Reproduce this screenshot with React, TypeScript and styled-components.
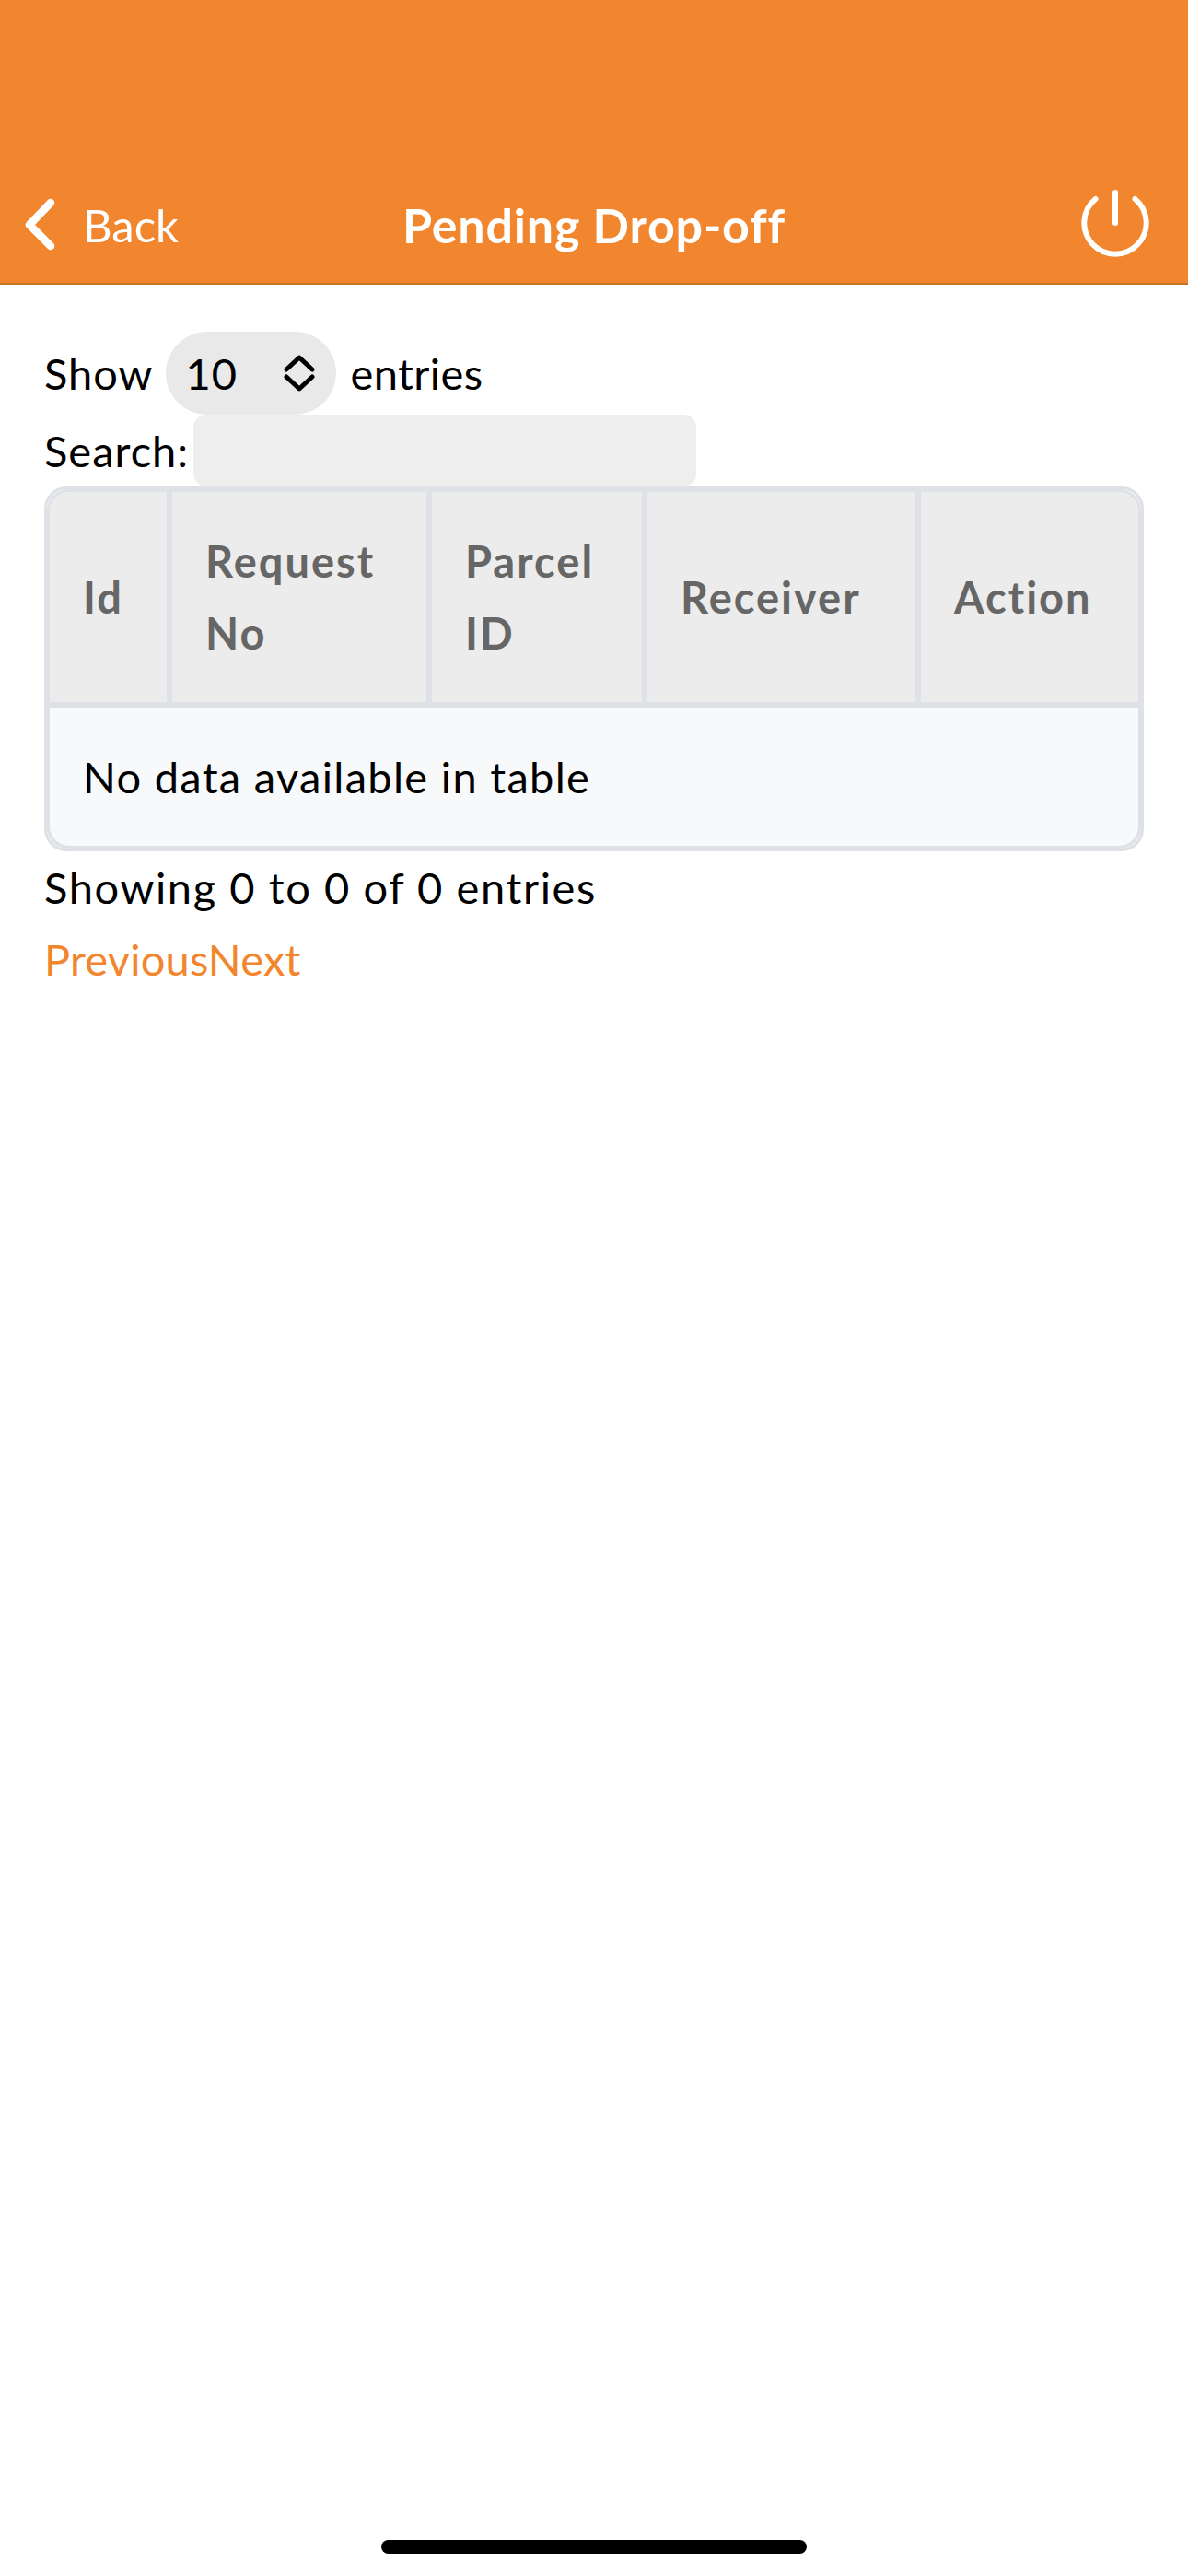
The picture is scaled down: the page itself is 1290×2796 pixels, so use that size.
import React from "react";
import styled, { createGlobalStyle } from "styled-components";

const GlobalStyle = createGlobalStyle`
  html, body {
    margin: 0;
    padding: 0;
    background: #fff;
  }
  body {
    font-family: "Lato", "Liberation Sans", sans-serif;
    font-size: 47px;
    letter-spacing: 1px;
    line-height: 78px;
    color: #000;
  }
`;

const Page = styled.div`
  position: relative;
  width: 1290px;
  height: 2796px;
  overflow: hidden;
  background: #fff;
`;

const Header = styled.header`
  height: 309px;
  box-sizing: border-box;
  padding: 196px 42px 0 26px;
  display: grid;
  grid-template-columns: 1fr auto 1fr;
  align-items: center;
  align-content: start;
  background: #f1862e;
  border-bottom: 2px solid #c9732a;
  color: #fff;
`;

const BackLink = styled.div`
  display: flex;
  align-items: center;
  gap: 28px;
  font-size: 49px;
  letter-spacing: 0;
  line-height: 96px;
`;

const Title = styled.h1`
  margin: 0 0 0 16px;
  font-size: 52px;
  letter-spacing: 0.8px;
  line-height: 96px;
  font-weight: 700;
`;

const PowerButton = styled.div`
  justify-self: end;
  align-self: start;
  display: flex;
  margin-top: 9px;
`;

const Content = styled.main`
  padding: 51px 48px 0;
`;

const LengthRow = styled.div`
  display: flex;
  align-items: center;
  height: 90px;
`;

const LengthSelect = styled.div`
  width: 185px;
  height: 90px;
  box-sizing: border-box;
  margin: 0 16px 0 13px;
  padding: 0 23px 0 22px;
  display: flex;
  align-items: center;
  justify-content: space-between;
  border-radius: 45px;
  background: #e9e9e9;
`;

const EntriesLabel = styled.span`
  letter-spacing: 0.4px;
`;

const SearchRow = styled.div`
  display: flex;
  align-items: center;
  height: 78px;
`;

const SearchInput = styled.div`
  width: 546px;
  height: 78px;
  margin-left: 5px;
  border-radius: 14px;
  background: #eeeeee;
`;

const TableWrap = styled.div`
  box-sizing: border-box;
  width: 1194px;
  border: 3px solid #dee2e6;
  border-radius: 24px;
  overflow: hidden;
  background: #eef0f3;
`;

const Table = styled.table`
  width: 100%;
  box-sizing: border-box;
  table-layout: fixed;
  border-collapse: separate;
  border-spacing: 0;
  border: 3px solid #dee2e6;
  border-radius: 24px;
  overflow: hidden;
  background: #f8f9fa;
`;

const HeadCell = styled.th<{ $width: number }>`
  width: ${(p) => p.$width}px;
  height: 234px;
  box-sizing: border-box;
  padding: 0 20px 0 36px;
  background: #ececec;
  border-right: 6px solid #dee2e6;
  border-bottom: 6px solid #dee2e6;
  color: #666;
  font-weight: 700;
  letter-spacing: 2px;
  text-align: left;
  &:last-child {
    border-right: 0;
  }
`;

const EmptyCell = styled.td`
  height: 150px;
  padding: 0 36px;
  letter-spacing: 1.3px;
`;

const TableInfo = styled.div`
  letter-spacing: 1.6px;
`;

const PagerLinks = styled.div`
  color: #f1862e;
  letter-spacing: 0.2px;
`;

const HomeIndicator = styled.div`
  position: absolute;
  left: 414px;
  bottom: 24px;
  width: 462px;
  height: 15px;
  border-radius: 8px;
  background: #000;
`;

const columns = [
  { label: "Id", width: 133 },
  { label: "Request No", width: 282 },
  { label: "Parcel ID", width: 234 },
  { label: "Receiver", width: 297 },
  { label: "Action", width: 236 },
];

export default function App() {
  return (
    <Page>
      <GlobalStyle />
      <Header>
        <BackLink>
          <svg width="36" height="60" viewBox="0 0 36 60" fill="none">
            <path d="M29 6 L6 30 L29 53" stroke="#fff" strokeWidth="8.5" strokeLinecap="round" strokeLinejoin="round" />
          </svg>
          <span>Back</span>
        </BackLink>
        <Title>Pending Drop-off</Title>
        <PowerButton>
          <svg width="74" height="74" viewBox="0 0 74 74" fill="none">
            <path d="M15.5 11 A33.7 33.7 0 1 0 58.5 11" stroke="#fff" strokeWidth="6" strokeLinecap="round" />
            <path d="M37 4 V37" stroke="#fff" strokeWidth="6" strokeLinecap="round" />
          </svg>
        </PowerButton>
      </Header>
      <Content>
        <LengthRow>
          Show
          <LengthSelect>
            <span>10</span>
            <svg width="34" height="40" viewBox="0 0 34 40" fill="none">
              <path d="M3 16 L17 3 L31 16 M3 24 L17 37 L31 24" stroke="#000" strokeWidth="5" strokeLinecap="round" strokeLinejoin="round" />
            </svg>
          </LengthSelect>
          <EntriesLabel>entries</EntriesLabel>
        </LengthRow>
        <SearchRow>
          Search:
          <SearchInput />
        </SearchRow>
        <TableWrap>
          <Table>
            <thead>
              <tr>
                {columns.map((c) => (
                  <HeadCell key={c.label} $width={c.width}>
                    {c.label}
                  </HeadCell>
                ))}
              </tr>
            </thead>
            <tbody>
              <tr>
                <EmptyCell colSpan={5}>No data available in table</EmptyCell>
              </tr>
            </tbody>
          </Table>
        </TableWrap>
        <TableInfo>Showing 0 to 0 of 0 entries</TableInfo>
        <PagerLinks>PreviousNext</PagerLinks>
      </Content>
      <HomeIndicator />
    </Page>
  );
}
